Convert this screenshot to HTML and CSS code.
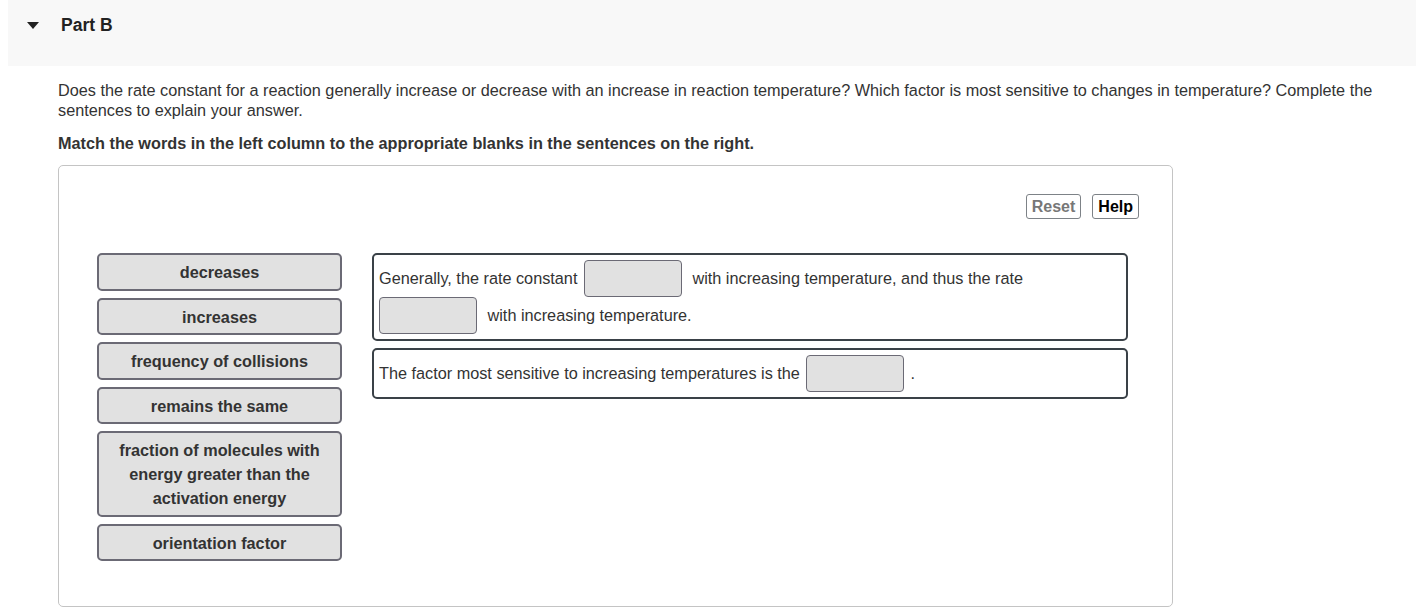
FILE: index.html
```html
<!DOCTYPE html>
<html lang="en">

<head>
    <meta charset="UTF-8">
    <meta name="viewport" content="width=device-width, initial-scale=1.0">
    <title>Part B</title>
    <link rel="stylesheet" href="styles.css">
</head>

<body>
    <div class="part-header">
        <span class="caret"></span>
        <h2>Part B</h2>
    </div>

    <div class="part-body">
        <p class="question">Does the rate constant for a reaction generally increase or decrease with an increase in reaction temperature? Which factor is most sensitive to changes in temperature? Complete the sentences to explain your answer.</p>
        <p class="instruction">Match the words in the left column to the appropriate blanks in the sentences on the right.</p>

        <div class="dnd">
            <div class="toolbar">
                <button class="tool-btn reset">Reset</button>
                <button class="tool-btn">Help</button>
            </div>

            <div class="columns">
                <ul class="choices">
                    <li class="choice">decreases</li>
                    <li class="choice">increases</li>
                    <li class="choice">frequency of collisions</li>
                    <li class="choice">remains the same</li>
                    <li class="choice">fraction of molecules with energy greater than the activation energy</li>
                    <li class="choice">orientation factor</li>
                </ul>

                <div class="sentences">
                    <div class="sentence">
                        Generally, the rate constant <span class="blank"></span> with increasing temperature, and thus the rate<br>
                        <span class="blank first"></span> with increasing temperature.
                    </div>
                    <div class="sentence">
                        The factor most sensitive to increasing temperatures is the <span class="blank"></span>.
                    </div>
                </div>
            </div>
        </div>
    </div>
</body>

</html>
```

FILE: styles.css
```css
/**** DEFAULTS ****/

* {
    padding: 0;
    margin: 0;
    box-sizing: border-box;
}

body {
    font-family: "Liberation Sans", Arial, sans-serif;
    font-size: 16.25px;
    color: #333;
    background: #fff;
}

/**** HEADER ****/

.part-header {
    margin-left: 8px;
    height: 66px;
    background-color: #f8f8f8;
    display: flex;
    align-items: flex-start;
    padding-top: 15px;
}

.caret {
    width: 0;
    height: 0;
    margin: 7px 0 0 19px;
    border-left: 6px solid transparent;
    border-right: 6px solid transparent;
    border-top: 7px solid #222;
}

.part-header h2 {
    font-size: 17.5px;
    font-weight: bold;
    color: #222;
    margin-left: 22px;
    line-height: 20px;
}

/**** BODY ****/

.part-body {
    padding: 14px 20px 0 58px;
}

.question {
    line-height: 20px;
}

.instruction {
    font-weight: bold;
    margin-top: 13px;
    line-height: 20px;
}

.dnd {
    width: 1115px;
    height: 442px;
    margin-top: 12px;
    border: 1px solid #c4c4c4;
    border-radius: 5px;
    padding: 28px 33px 0 38px;
}

.toolbar {
    display: flex;
    justify-content: flex-end;
    gap: 11px;
}

.tool-btn {
    font-family: inherit;
    font-size: 16px;
    font-weight: bold;
    color: #000;
    background: #fff;
    border: 1px solid #7d8287;
    border-radius: 3px;
    height: 25px;
    padding: 0 5px;
}

.tool-btn.reset {
    color: #777;
}

.columns {
    display: flex;
    gap: 30px;
    margin-top: 34px;
}

.choices {
    list-style: none;
    width: 245px;
    display: flex;
    flex-direction: column;
    gap: 7px;
}

.choice {
    background-color: #e1e1e1;
    border: 2px solid #6b6a75;
    border-radius: 5px;
    padding: 5px 16px 4.5px;
    text-align: center;
    font-weight: bold;
    line-height: 24px;
    color: #333;
}

.sentences {
    width: 756px;
    display: flex;
    flex-direction: column;
    gap: 7px;
}

.sentence {
    border: 2px solid #3a4147;
    border-radius: 5px;
    padding: 5px;
    line-height: 37px;
}

.blank {
    display: inline-block;
    vertical-align: top;
    width: 98px;
    height: 37px;
    background-color: #e1e1e1;
    border: 1px solid #6b6a75;
    border-radius: 4px;
    margin: 0 6px 0 2px;
}

.blank.first {
    margin-left: 0;
}
```
